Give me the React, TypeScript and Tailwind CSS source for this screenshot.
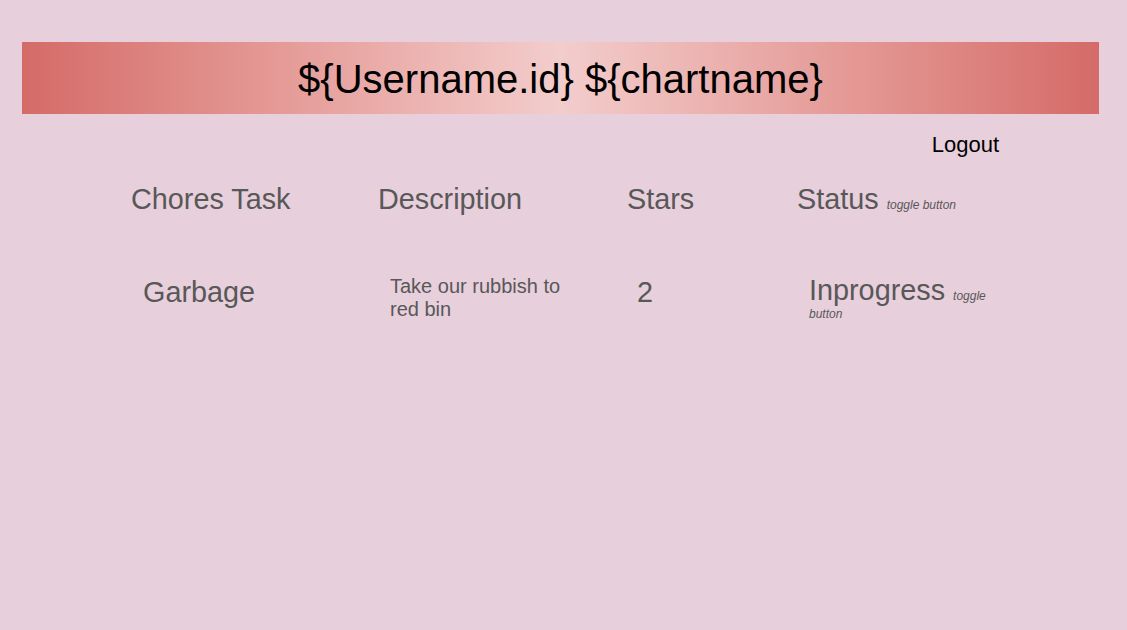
const font = { fontFamily: '"Liberation Sans", Arial, sans-serif' };

const chores = [
  {
    task: "Garbage",
    description: "Take our rubbish to red bin",
    stars: 2,
    status: "Inprogress"
  }
];

export default function App() {
  return (
    <div
      className="min-h-screen bg-[#e8cfdc] pl-[22px] pr-[28px] pt-[42px]"
      style={font}
    >
      {/* Banner */}
      <div className="flex h-[72px] items-center justify-center bg-gradient-to-r from-[#d46b68] via-[#f2cdcc] to-[#d46b68] pt-[2px]">
        <h1 className="text-[40px] leading-[46px] text-black">
          ${"{"}Username.id{"}"} ${"{"}chartname{"}"}
        </h1>
      </div>

      {/* Logout */}
      <div className="flex justify-end pr-[100px] pt-[18px]">
        <button className="text-[22px] leading-[25px] text-black">Logout</button>
      </div>

      {/* Table header */}
      <div className="ml-[109px] mt-[26px] grid grid-cols-[247px_249px_170px_260px] text-[#585858]">
        <div className="text-[28.8px] leading-[33px]">Chores Task</div>
        <div className="text-[28.8px] leading-[33px]">Description</div>
        <div className="text-[28.8px] leading-[33px]">Stars</div>
        <div className="text-[12px] leading-[14px]">
          <span className="text-[28.8px] leading-[33px]">Status </span>
          <span className="italic">toggle button</span>
        </div>
      </div>

      {/* Rows */}
      {chores.map((chore, index) => (
        <div
          key={index}
          className="ml-[109px] mt-[57px] grid grid-cols-[247px_249px_170px_260px] items-start text-[#585858]"
        >
          <div className="pl-3 pt-[3px] text-[28.8px] leading-[33px]">{chore.task}</div>
          <div className="w-[200px] pl-3 pt-[2px] text-[20px] leading-[23px]">{chore.description}</div>
          <div className="pl-[10px] pt-[3px] text-[28.8px] leading-[33px]">{chore.stars}</div>
          <div className="w-[215px] pl-3 pt-[1px] text-[12px] leading-[14px]">
            <span className="text-[28.8px] leading-[33px]">{chore.status} </span>
            <span className="italic">toggle button</span>
          </div>
        </div>
      ))}
    </div>
  );
}
